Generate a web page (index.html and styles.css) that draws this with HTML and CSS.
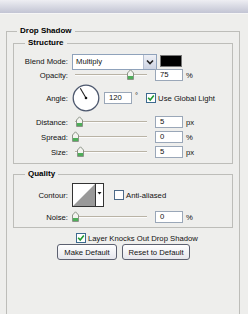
FILE: index.html
```html
<!DOCTYPE html>
<html>
<head>
<meta charset="utf-8">
<link rel="stylesheet" href="styles.css">
</head>
<body>
<div class="titlebar"></div>
<div class="dialog">
  <fieldset class="group outer">
    <legend class="lg-outer">Drop Shadow</legend>
    <fieldset class="group structure">
      <legend class="lg-inner">Structure</legend>
      <div class="row r-blend">
        <span class="lbl">Blend Mode:</span>
        <div class="select">
          <span class="sel-text">Multiply</span>
          <span class="sel-btn"><svg width="8" height="6" viewBox="0 0 8 6"><path d="M1 1.5 L4 4.5 L7 1.5" fill="none" stroke="#222" stroke-width="1.6"/></svg></span>
        </div>
        <span class="swatch"></span>
      </div>
      <div class="row r-opacity">
        <span class="lbl">Opacity:</span>
        <div class="slider"><span class="track"></span><svg class="thumb" style="left:55px" width="7" height="11" viewBox="0 0 7 11"><path d="M0.5 10.5 V4 L3.5 0.8 L6.5 4 V10.5 Z" fill="#f4f4f0" stroke="#8c9488"/><rect x="1" y="7" width="5" height="3" fill="#4fae5a"/></svg></div>
        <span class="num">75</span><span class="unit">%</span>
      </div>
      <div class="row r-angle">
        <span class="lbl">Angle:</span>
        <svg class="dial" width="28" height="28" viewBox="0 0 28 28"><circle cx="14" cy="14" r="12.8" fill="#fff" stroke="#4d586e" stroke-width="1.3"/><line x1="14" y1="14" x2="8.3" y2="4.2" stroke="#222" stroke-width="1.1"/><circle cx="14" cy="14" r="1.3" fill="#111"/></svg>
        <span class="num num-angle">120</span><span class="deg">°</span>
        <svg class="chk chk-global" width="10" height="10" viewBox="0 0 10 10"><rect x="0.5" y="0.5" width="9" height="9" fill="#fff" stroke="#3d6a8f"/><path d="M2.2 4.8 L4.2 7 L7.8 2.6" fill="none" stroke="#1e9a2e" stroke-width="1.6"/></svg>
        <span class="chk-text">Use Global Light</span>
      </div>
      <div class="row r-dist">
        <span class="lbl">Distance:</span>
        <div class="slider"><span class="track"></span><svg class="thumb" style="left:4px" width="7" height="11" viewBox="0 0 7 11"><path d="M0.5 10.5 V4 L3.5 0.8 L6.5 4 V10.5 Z" fill="#f4f4f0" stroke="#8c9488"/><rect x="1" y="7" width="5" height="3" fill="#4fae5a"/></svg></div>
        <span class="num">5</span><span class="unit">px</span>
      </div>
      <div class="row r-spread">
        <span class="lbl">Spread:</span>
        <div class="slider"><span class="track"></span><svg class="thumb" style="left:0px" width="7" height="11" viewBox="0 0 7 11"><path d="M0.5 10.5 V4 L3.5 0.8 L6.5 4 V10.5 Z" fill="#f4f4f0" stroke="#8c9488"/><rect x="1" y="7" width="5" height="3" fill="#4fae5a"/></svg></div>
        <span class="num">0</span><span class="unit">%</span>
      </div>
      <div class="row r-size">
        <span class="lbl">Size:</span>
        <div class="slider"><span class="track"></span><svg class="thumb" style="left:5px" width="7" height="11" viewBox="0 0 7 11"><path d="M0.5 10.5 V4 L3.5 0.8 L6.5 4 V10.5 Z" fill="#f4f4f0" stroke="#8c9488"/><rect x="1" y="7" width="5" height="3" fill="#4fae5a"/></svg></div>
        <span class="num">5</span><span class="unit">px</span>
      </div>
    </fieldset>
    <fieldset class="group quality">
      <legend class="lg-inner">Quality</legend>
      <div class="row r-contour">
        <span class="lbl">Contour:</span>
        <svg class="contour" width="32" height="24" viewBox="0 0 32 24"><rect x="0.5" y="0.5" width="31" height="23" fill="#fff" stroke="#333"/><polygon points="1,23 23,1 23,23" fill="#999"/><line x1="23.5" y1="1" x2="23.5" y2="23" stroke="#333"/><polygon points="25.5,9 29.5,9 27.5,11.5" fill="#111"/></svg>
        <svg class="chk chk-anti" width="10" height="10" viewBox="0 0 10 10"><rect x="0.5" y="0.5" width="9" height="9" fill="#fff" stroke="#4d6a88"/></svg>
        <span class="chk-text">Anti-aliased</span>
      </div>
      <div class="row r-noise">
        <span class="lbl">Noise:</span>
        <div class="slider"><span class="track"></span><svg class="thumb" style="left:0px" width="7" height="11" viewBox="0 0 7 11"><path d="M0.5 10.5 V4 L3.5 0.8 L6.5 4 V10.5 Z" fill="#f4f4f0" stroke="#8c9488"/><rect x="1" y="7" width="5" height="3" fill="#4fae5a"/></svg></div>
        <span class="num">0</span><span class="unit">%</span>
      </div>
    </fieldset>
    <div class="knock">
      <svg class="chk" width="10" height="10" viewBox="0 0 10 10"><rect x="0.5" y="0.5" width="9" height="9" fill="#fff" stroke="#3d6a8f"/><path d="M2.2 4.8 L4.2 7 L7.8 2.6" fill="none" stroke="#1e9a2e" stroke-width="1.6"/></svg>
      <span class="chk-text">Layer Knocks Out Drop Shadow</span>
    </div>
    <div class="buttons">
      <span class="btn btn-make">Make Default</span>
      <span class="btn btn-reset">Reset to Default</span>
    </div>
  </fieldset>
</div>
</body>
</html>
```

FILE: styles.css
```css
html, body {
  margin: 0;
  padding: 0;
  background: #eeeeec;
  width: 248px;
  height: 314px;
  overflow: hidden;
  font-family: "Liberation Sans", Arial, sans-serif;
  font-size: 7.7px;
  color: #111;
}
.titlebar {
  height: 13px;
  background: linear-gradient(#eeeef3, #c2c4d3);
  border-bottom: 1px solid #f6f6f6;
}
.dialog {
  padding-top: 12px;
}
.group {
  margin: 0;
  padding: 0;
  border: 1px solid #bdbdb9;
  min-width: 0;
  box-sizing: border-box;
}
legend {
  font-weight: bold;
  font-size: 8px;
  line-height: 10px;
  padding: 0 3px;
  color: #000;
}
.outer {
  margin-left: 6px;
  width: 234px;
  height: 300px;
  padding: 2px 6px 0 6px;
}
.lg-outer {
  margin-left: 4px;
}
.lg-inner {
  margin-left: 11px;
}
.structure {
  padding: 6px 0 5px 0;
}
.quality {
  margin-top: 5px;
  padding: 4px 0 4px 0;
}
.row {
  display: flex;
  align-items: center;
}
.lbl {
  width: 54px;
  margin-right: 4px;
  text-align: right;
  flex: none;
}
.r-blend { height: 15px; }
.r-opacity { height: 12px; }
.r-angle { height: 28px; margin-top: 3px; }
.r-dist { height: 12px; margin-top: 4px; }
.r-spread { height: 12px; margin-top: 3px; }
.r-size { height: 12px; margin-top: 3px; }
.r-contour { height: 24px; }
.r-noise { height: 12px; margin-top: 4px; }

.select {
  display: flex;
  width: 85px;
  height: 16px;
  box-sizing: border-box;
  border: 1px solid #8fa2bb;
  background: #fff;
  align-self: flex-start;
}
.sel-text {
  flex: 1;
  padding-left: 3px;
  line-height: 14px;
}
.sel-btn {
  width: 12px;
  background: linear-gradient(#eef0f6, #cdd3e2);
  border-left: 1px solid #b6bfd0;
  display: flex;
  align-items: center;
  justify-content: center;
}
.swatch {
  width: 22px;
  height: 12px;
  box-sizing: border-box;
  margin-left: 3px;
  background: #000;
  border: 1px solid #777;
  align-self: flex-start;
  margin-top: 1px;
}
.slider {
  position: relative;
  width: 80px;
  height: 12px;
  flex: none;
  display: flex;
  align-items: center;
}
.track {
  margin-left: 3px;
  width: 72px;
  height: 1px;
  background: #b9b3a5;
  border-bottom: 1px solid #fbfbfb;
}
.thumb {
  position: absolute;
  top: 0;
}
.num {
  width: 28px;
  height: 12px;
  box-sizing: border-box;
  margin-left: 3px;
  border: 1px solid #9aa7b8;
  background: #fff;
  padding-left: 4px;
  line-height: 10px;
  flex: none;
}
.unit {
  margin-left: 3px;
}
.dial {
  flex: none;
}
.num-angle {
  margin-left: 4px;
}
.deg {
  margin-left: 3px;
  align-self: flex-start;
  margin-top: 7px;
}
.chk {
  flex: none;
}
.chk-global {
  margin-left: 8px;
}
.chk-text {
  margin-left: 2px;
  white-space: nowrap;
}
.contour {
  flex: none;
}
.chk-anti {
  margin-left: 10px;
}
.knock {
  display: flex;
  align-items: center;
  height: 10px;
  margin-top: 5px;
  margin-left: 63px;
}
.buttons {
  display: flex;
  margin-top: 1px;
  margin-left: 44px;
  gap: 5px;
}
.btn {
  height: 16px;
  box-sizing: border-box;
  border: 1px solid #5c6070;
  border-radius: 3px;
  background: linear-gradient(#ffffff, #e6e6ec);
  display: flex;
  align-items: center;
  justify-content: center;
  color: #111;
}
.btn-make { width: 60px; }
.btn-reset { width: 68px; }
```
